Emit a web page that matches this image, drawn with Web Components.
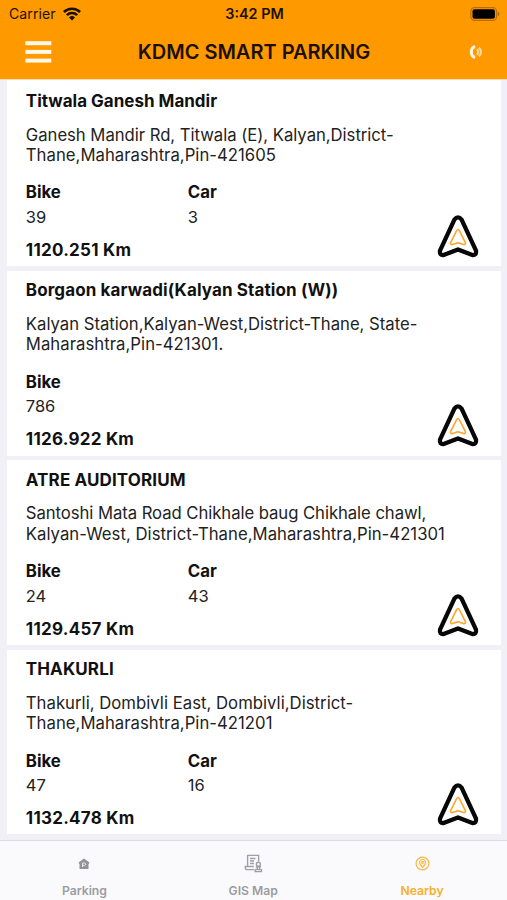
<!DOCTYPE html>
<html lang="en"><head><meta charset="utf-8"><title>KDMC Smart Parking</title>
<style>
html,body{margin:0;height:100%}
body{font-family:Inter,"Liberation Sans",sans-serif;background:#f1f0f6;color:#111;overflow:hidden}
</style></head><body>
<parking-app></parking-app>
<script>
const define=(name,html,setup)=>customElements.define(name,class extends HTMLElement{
  connectedCallback(){
    if(this.shadowRoot)return;
    const root=this.attachShadow({mode:'open'});
    const t=document.createElement('template');
    t.innerHTML=html;
    root.append(t.content.cloneNode(true));
    if(setup)setup(this,root);
  }
});

define('status-bar',`<style>
:host{display:grid;grid-template-columns:1fr auto 1fr;align-items:center;height:26px;padding:1px 7px 0 9px;box-sizing:border-box;color:#1b1000;font-size:14px}
.left{display:flex;align-items:center;gap:7px;letter-spacing:.12px}
.time{font-weight:600;font-size:14.4px}
.bat{justify-self:end}
svg{display:block}
</style>
<div class="left"><span>Carrier</span>
<svg width="18" height="14" viewBox="0 0 18 14" fill="none" stroke="#1b1000" stroke-width="2.5"><path d="M.9 5a11.6 11.6 0 0 1 16.2 0M3.8 8.2a7.4 7.4 0 0 1 10.4 0"/><path d="M9 13.6 6 10.5a4.3 4.3 0 0 1 6 0z" fill="#1b1000" stroke="none"/></svg></div>
<span class="time">3:42 PM</span>
<svg class="bat" width="30" height="14" viewBox="0 0 30 14"><rect x=".9" y=".7" width="25.6" height="12.6" rx="3.6" fill="none" stroke="#b97000" stroke-width="1.2"/><rect x="2.5" y="2.3" width="22.4" height="9.4" rx="2" fill="#000"/><path d="M27.8 4.7c2 .7 2 3.9 0 4.6z" fill="#a96600"/></svg>`);

define('nav-bar',`<style>
:host{display:grid;grid-template-columns:1fr auto 1fr;align-items:center;height:52px;padding:0 24px 0 25px;box-sizing:border-box;color:#1b1000}
h1{margin:0;font-size:20px;line-height:26px;font-weight:600;letter-spacing:-.02px}
svg{display:block}.call{justify-self:end}
</style>
<svg width="27" height="24" viewBox="0 0 27 24" fill="#fff8e8"><rect x=".3" y="1.2" width="26" height="4"/><rect x=".3" y="9.9" width="26" height="4"/><rect x=".3" y="18.6" width="26" height="4"/></svg>
<h1><slot></slot></h1>
<svg class="call" width="14" height="14" viewBox="0 0 14 14"><path d="M6.2 2H4.6C1.6 3.6 1.6 10.4 4.6 12h1.6" fill="none" stroke="#fff5df" stroke-width="3"/><path d="M8 4.3c1.3 1.4 1.3 4 0 5.4" stroke="#ffe4b2" stroke-width="2" fill="none"/><path d="M9.7 2.7c3 1.8 3 6.8 0 8.6" stroke="#ffd79a" stroke-width="2.2" fill="none"/></svg>`);

define('direction-icon',`<style>:host{display:block}svg{display:block}</style>
<svg width="42" height="43" viewBox="0 0 42 43" fill="none" stroke-linejoin="round"><path d="M17.4 4.7Q21 .2 24.6 4.7L39 35.6Q39.7 40.5 35.4 40.1L21 34.4 6.6 40.1Q2.3 40.5 3 35.6Z" stroke="#070707" stroke-width="4.3"/><path d="M19.5 15.8Q21 13.3 22.5 15.8L28.4 27.6Q28.8 30 26.5 29.6L21 27.7 15.5 29.6Q13.2 30 13.6 27.6Z" stroke="#ffa62b" stroke-width="1.6"/></svg>`);

define('slot-count',`<style>
:host{display:block;width:162px;font-size:16.5px;line-height:20px}
b{display:block;font-size:16.8px;margin-bottom:4.5px}
span{display:block;color:#222}
</style><b></b><span></span>`,(el,r)=>{
  r.querySelector('b').textContent=el.getAttribute('label');
  r.querySelector('span').textContent=el.getAttribute('value');
});

define('parking-card',`<style>
:host{display:flex;flex-direction:column;height:184.7px;box-sizing:border-box;padding:9.2px 22px 0 18.8px;background:#fff;flex:none}
h2{margin:0;font-size:17px;line-height:20px;font-weight:700}
.addr{margin-top:13.8px;font-size:16.7px;line-height:20.5px;color:#222;white-space:nowrap}
.addr span{display:block}
.foot{display:flex;justify-content:space-between;align-items:flex-end;margin-top:16.8px}
.counts{display:flex;height:44.5px}
.km{margin-top:13px;font-size:17px;line-height:20px;font-weight:700;letter-spacing:.25px}
direction-icon{margin-bottom:2px}
</style>
<h2></h2><div class="addr"></div>
<div class="foot"><div><div class="counts"><slot></slot></div><div class="km"></div></div><direction-icon></direction-icon></div>`,(el,r)=>{
  const d=el.data,h=r.querySelector('h2');
  h.textContent=d.name;h.style.letterSpacing=d.track+'px';
  for(const [text,track] of d.address){
    const s=document.createElement('span');
    s.textContent=text;s.style.letterSpacing=track+'px';
    r.querySelector('.addr').append(s);
  }
  r.querySelector('.km').textContent=d.distance;
});

define('tab-item',`<style>
:host{display:flex;flex-direction:column;align-items:center;color:#9c9ca0;font-size:12.2px;font-weight:600;line-height:16px}
:host([active]){color:#fbae29}
.icon{height:24px;display:flex;align-items:center;margin-bottom:7px}
</style><div class="icon"><slot name="icon"></slot></div><span><slot></slot></span>`);

define('tab-bar',`<style>
:host{display:grid;grid-template-columns:repeat(3,1fr);height:60px;box-sizing:border-box;border-top:1px solid #dddde1;background:#fafafc;padding:10.5px .5px 0 0}
svg{display:block}
</style>
<tab-item><svg slot="icon" width="12" height="12" viewBox="0 0 12 12"><path d="M6 .5 11.2 4.3v1.5H10.5V11H1.5V5.8H.8V4.3z" fill="#929297"/><path d="M4.6 9V5h1.8a1.2 1.2 0 0 1 0 2.4H4.6" fill="none" stroke="#ececf0" stroke-width="1"/></svg>Parking</tab-item>
<tab-item><svg slot="icon" width="19" height="19" viewBox="0 0 19 19" fill="none" stroke="#a0a0a4" stroke-width="1.4"><path d="M3.6 12.5V1.4h11v6M3.6 12.5H1.3v1.6q0 1.5 1.5 1.5H10M3.6 12.5h6.2M6 4.5h5.5M6 7h4M6 9.5h4"/><circle cx="14.4" cy="10.2" r="2"/><path d="M11.2 17.6v-2h6.3v2zM13 15.5l.7-3.1M15.8 15.5l-.7-3.1M11.8 12.7h5.2"/></svg>GIS Map</tab-item>
<tab-item active><svg slot="icon" width="15" height="15" viewBox="0 0 15 15" fill="none" stroke="#fdb640" stroke-width="1.2"><circle cx="7.5" cy="7.5" r="6.4"/><path d="M7.5 11.3C5.3 9 4.5 8 4.5 6.5a3 3 0 0 1 6 0C10.5 8 9.7 9 7.5 11.3z"/><circle cx="7.5" cy="6.5" r=".8"/></svg>Nearby</tab-item>`);

define('parking-app',`<style>
:host{display:flex;flex-direction:column;height:900px;width:507px}
header{background:#ff9900;height:79px;flex:none;border-bottom:1px solid #ffe0b0}
main{flex:1;min-height:0;overflow:hidden;padding:0 6px 0 7px;display:flex;flex-direction:column;gap:4.7px;background:linear-gradient(#fff,#fff) 7px 0/494px 4px no-repeat,#f1f0f6}
main parking-card:first-child{margin-top:1.6px}
tab-bar{flex:none}
</style>
<header><status-bar></status-bar><nav-bar>KDMC SMART PARKING</nav-bar></header><main></main><tab-bar></tab-bar>`,(el,r)=>{
  const lots=[
    {name:'Titwala Ganesh Mandir',track:0,address:[['Ganesh Mandir Rd, Titwala (E), Kalyan,District-',-.03],['Thane,Maharashtra,Pin-421605',.03]],bike:39,car:3,distance:'1120.251 Km'},
    {name:'Borgaon karwadi(Kalyan Station (W))',track:.117,address:[['Kalyan Station,Kalyan-West,District-Thane, State-',0],['Maharashtra,Pin-421301.',.05]],bike:786,distance:'1126.922 Km'},
    {name:'ATRE AUDITORIUM',track:.13,address:[['Santoshi Mata Road Chikhale baug Chikhale chawl,',-.06],['Kalyan-West, District-Thane,Maharashtra,Pin-421301',.04]],bike:24,car:43,distance:'1129.457 Km'},
    {name:'THAKURLI',track:.13,address:[['Thakurli, Dombivli East, Dombivli,District-',.03],['Thane,Maharashtra,Pin-421201',.03]],bike:47,car:16,distance:'1132.478 Km'}];
  for(const lot of lots){
    const card=document.createElement('parking-card');
    card.data=lot;
    for(const [label,value] of [['Bike',lot.bike],['Car',lot.car]]){
      if(value===undefined)continue;
      const c=document.createElement('slot-count');
      c.setAttribute('label',label);c.setAttribute('value',value);
      card.append(c);
    }
    r.querySelector('main').append(card);
  }
});
</script></body></html>
